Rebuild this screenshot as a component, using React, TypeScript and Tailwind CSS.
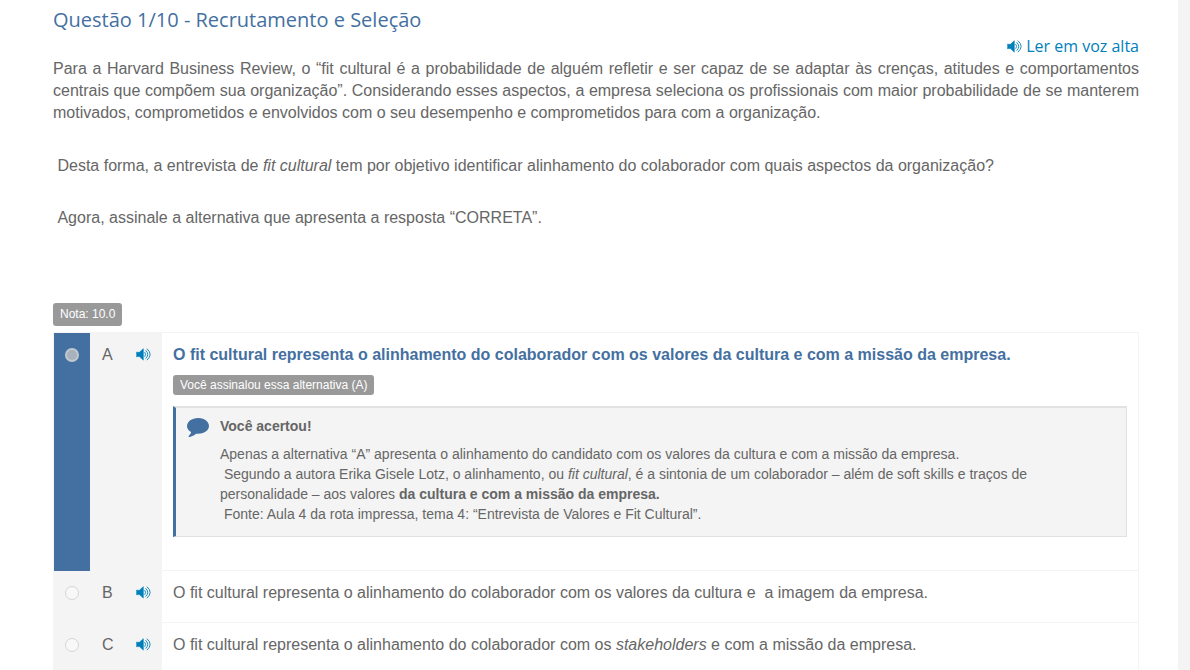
import { useState, type ReactNode } from "react";

function VolumeIcon() {
  return (
    <svg viewBox="0 0 15 13" className="h-[13px] w-[15px] shrink-0" fill="none" stroke="currentColor" strokeLinecap="round" aria-hidden="true">
      <path d="M0.5 4.3h2.9L7.3 0.7v11.4L3.4 8.6H0.5z" fill="currentColor" strokeWidth="0.6" strokeLinejoin="round" />
      <path d="M8.9 4.4Q10.6 6.4 8.9 8.4" strokeWidth="0.9" />
      <path d="M9.9 2.5Q13.9 6.4 9.9 10.3" strokeWidth="0.9" />
      <path d="M11.2 0.9Q17.4 6.4 11.2 11.9" strokeWidth="0.9" />
    </svg>
  );
}

function CommentIcon() {
  return (
    <svg viewBox="0 256 1792 1536" className="mt-[10px] h-[19px] w-[22px] shrink-0 text-[#4470a1]" fill="currentColor" aria-hidden="true">
      <path d="M1792 896q0 174-120 321.5t-326 233-450 85.5q-70 0-145-8-198 175-460 242-49 14-114 22-17 2-30.5-9t-17.5-29v-1q-3-4-.5-12t2-10 4.5-9.5l6-9 7-8.5 8-9q7-8 31-34.5t34.5-38 31-39.5 32.5-51 27-59 26-76q-157-89-247.5-220t-90.5-281q0-130 71-248.5t191-204.5 286-136.5 348-50.5q244 0 450 85.5t326 233 120 321.5z" />
    </svg>
  );
}

type OptionProps = {
  letter: string;
  checked: boolean;
  answered: boolean;
  onSelect: (letter: string) => void;
  label: ReactNode;
  children?: ReactNode;
};

function Option({ letter, checked, answered, onSelect, label, children }: OptionProps) {
  return (
    <li className="flex">
      <div className={`flex w-[37px] shrink-0 justify-center border-l border-[#f4f4f4] pt-[15px] ${checked ? "bg-[#4470a1]" : "bg-[#f4f4f4]"}`}>
        <input
          type="radio"
          id={`option-${letter}`}
          name="answer"
          checked={checked}
          onChange={() => onSelect(letter)}
          className="size-[14px] appearance-none rounded-full border border-[#d5d5d5] bg-[#f8f8f8] checked:border-2 checked:border-[#bfc8d1] checked:bg-[#a9b2bb]"
        />
      </div>
      <div className="flex w-[72px] shrink-0 justify-between bg-[#f4f4f4] pt-[11px] pr-[11px] pl-3">
        <span className="leading-[22px]">{letter}</span>
        <button type="button" aria-label={`Ouvir alternativa ${letter}`} className="flex h-5 items-center text-[#0080bb]">
          <VolumeIcon />
        </button>
      </div>
      <div className="min-w-0 grow border-r border-b border-[#f4f4f4] px-[11px] pt-[11px]">
        <label htmlFor={`option-${letter}`} className={`block leading-[22px] ${answered ? "font-bold text-[#4470a1]" : "pb-[18px]"}`}>
          {label}
        </label>
        {children}
      </div>
    </li>
  );
}

export default function App() {
  const [selected, setSelected] = useState("A");

  return (
    <div className="h-screen overflow-hidden bg-[#f4f4f4] pr-3 font-['Liberation_Sans',Arial,sans-serif] text-base text-[#666]">
      <main className="h-full bg-white pr-[39px] pl-[53px]">
        <h1 className="pt-2 font-['Open_Sans',sans-serif] text-xl leading-6 text-[#4470a1]">
          Questão 1/10 - Recrutamento e Seleção
        </h1>
        <div className="flex justify-end pt-[3px]">
          <button type="button" className="flex items-center gap-1 font-['Open_Sans',sans-serif] leading-[22px] text-[#0080bb]">
            <VolumeIcon />
            Ler em voz alta
          </button>
        </div>
        <p className="mt-px text-justify leading-[22px]">
          Para a Harvard Business Review, o “fit cultural é a probabilidade de alguém refletir e ser capaz de se adaptar às crenças, atitudes e comportamentos centrais que compõem sua organização”. Considerando esses aspectos, a empresa seleciona os profissionais com maior probabilidade de se manterem motivados, comprometidos e envolvidos com o seu desempenho e comprometidos para com a organização.
        </p>
        <p className="mt-[31px] leading-[22px]">
          &nbsp;Desta forma, a entrevista de <em>fit cultural</em> tem por objetivo identificar alinhamento do colaborador com quais aspectos da organização?
        </p>
        <p className="mt-[30px] leading-[22px]">&nbsp;Agora, assinale a alternativa que apresenta a resposta “CORRETA”.</p>
        <div className="mt-[74px] flex">
          <span className="rounded-[3px] bg-[#999] px-[7px] text-xs leading-[23px] text-white">Nota: 10.0</span>
        </div>
        <ul className="mt-[6px] border-t border-[#f4f4f4]">
          <Option
            letter="A"
            checked={selected === "A"}
            answered
            onSelect={setSelected}
            label="O fit cultural representa o alinhamento do colaborador com os valores da cultura e com a missão da empresa."
          >
            <div className="mt-[9px] flex">
              <span className="rounded-[3px] bg-[#999] px-[7px] text-xs leading-5 text-white">Você assinalou essa alternativa (A)</span>
            </div>
            <section className="mt-[11px] mb-[33px] flex gap-[11px] border border-t-2 border-l-[3px] border-[#e2e2e2] border-l-[#4470a1] bg-[#f4f4f4] pr-[70px] pb-3 pl-[11px] text-sm leading-5">
              <CommentIcon />
              <div className="pt-2">
                <h2 className="mb-2 font-bold">Você acertou!</h2>
                <p>Apenas a alternativa “A” apresenta o alinhamento do candidato com os valores da cultura e com a missão da empresa.</p>
                <p>
                  &nbsp;Segundo a autora Erika Gisele Lotz, o alinhamento, ou <em>fit cultural</em>, é a sintonia de um colaborador – além de soft skills e traços de personalidade – aos valores <strong>da cultura e com a missão da empresa.</strong>
                </p>
                <p>&nbsp;Fonte: Aula 4 da rota impressa, tema 4: “Entrevista de Valores e Fit Cultural”.</p>
              </div>
            </section>
          </Option>
          <Option
            letter="B"
            checked={selected === "B"}
            answered={false}
            onSelect={setSelected}
            label={<>O fit cultural representa o alinhamento do colaborador com os valores da cultura e&nbsp; a imagem da empresa.</>}
          />
          <Option
            letter="C"
            checked={selected === "C"}
            answered={false}
            onSelect={setSelected}
            label={<>O fit cultural representa o alinhamento do colaborador com os <em>stakeholders</em> e com a missão da empresa.</>}
          />
        </ul>
      </main>
    </div>
  );
}
